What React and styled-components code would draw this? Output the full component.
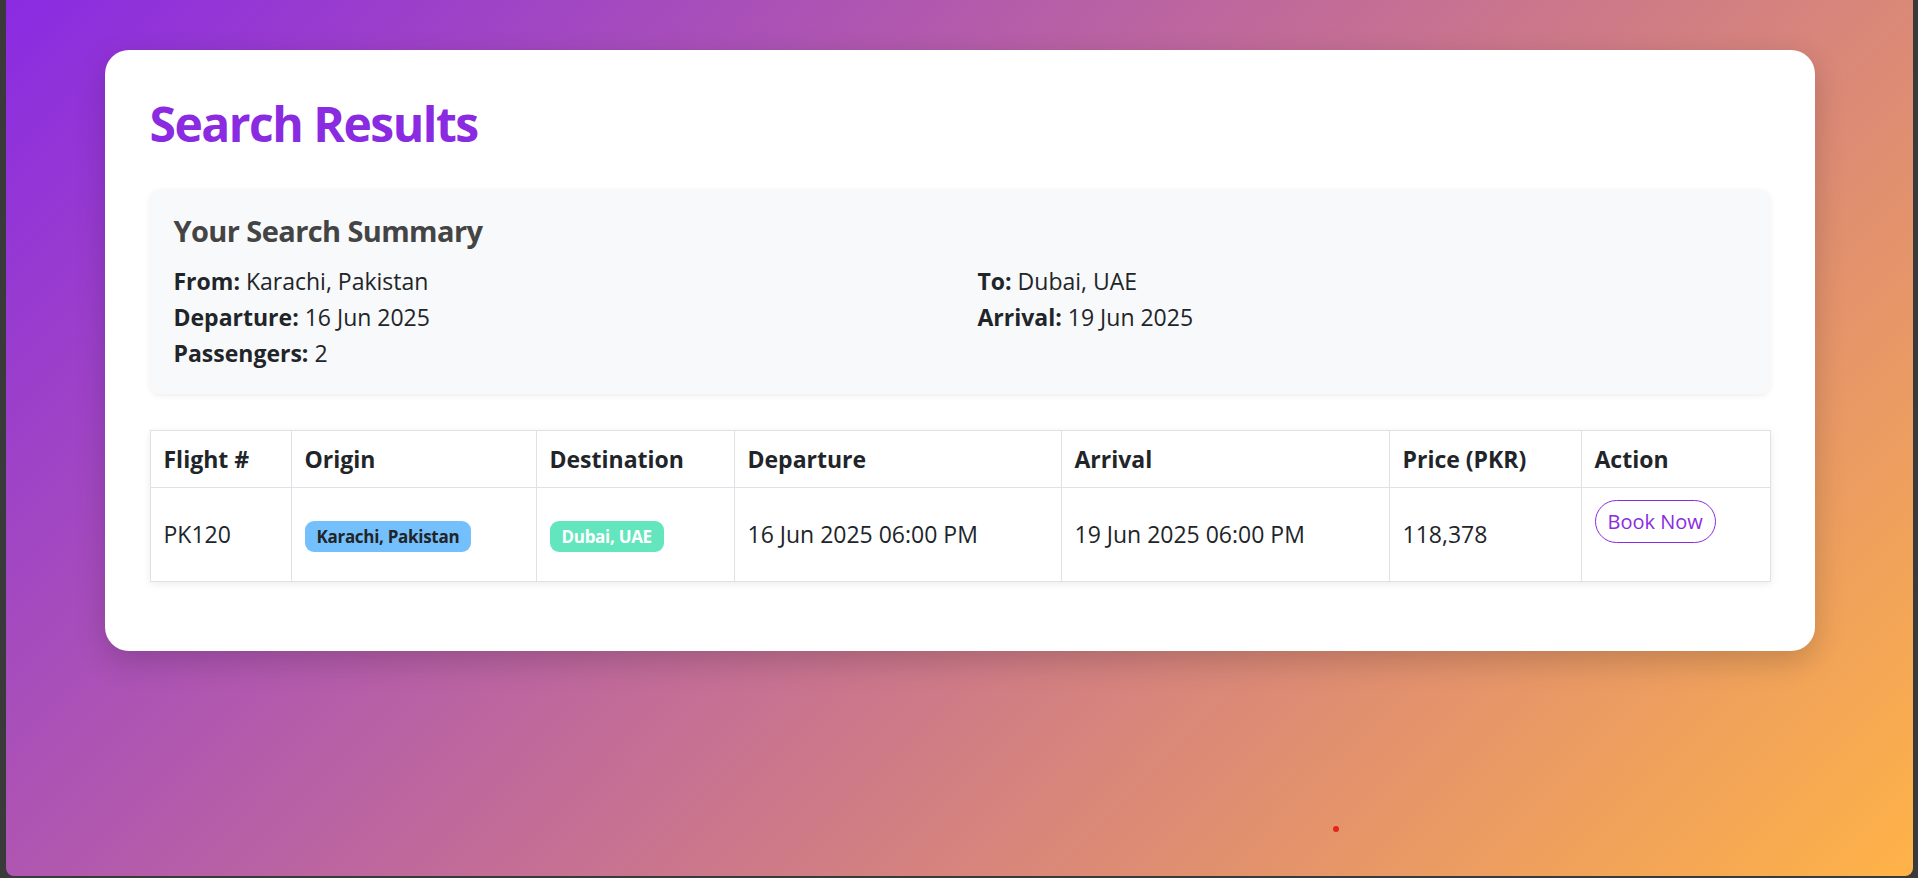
import React from 'react';
import styled, { createGlobalStyle } from 'styled-components';

const GlobalStyle = createGlobalStyle`
  html, body {
    margin: 0;
    height: 100%;
  }
  body {
    font-family: "Open Sans", "Noto Sans", sans-serif;
    color: #212529;
  }
  #root {
    height: 100%;
  }
`

const Frame = styled.div`
  position: relative;
  height: 100vh;
  box-sizing: border-box;
  padding: 0 5px 2px 6px;
  background: #3a3a3a;
`

const Backdrop = styled.main`
  height: 100%;
  box-sizing: border-box;
  padding-top: 50px;
  border-radius: 0 0 8px 8px;
  background: linear-gradient(135deg, #8a2be2 0%, #ffb347 100%);
`

const Card = styled.section`
  width: 1710px;
  margin: 0 auto;
  box-sizing: border-box;
  padding: 45px;
  background: #fff;
  border-radius: 24px;
  box-shadow: 0 10px 30px rgba(0, 0, 0, 0.18);
`

const Title = styled.h1`
  margin: 0 0 36px;
  font-size: 48px;
  line-height: 1.2;
  font-weight: 700;
  color: #8a2be2;
  letter-spacing: -1.5px;
`

const Summary = styled.div`
  padding: 24px 24px 23px;
  margin-bottom: 36px;
  background: #f8f9fa;
  border-radius: 10px;
  box-shadow: 0 2px 6px rgba(0, 0, 0, 0.07);
`

const SummaryTitle = styled.h3`
  margin: 0 0 14px;
  font-size: 29px;
  line-height: 36px;
  font-weight: 700;
  color: #444;
  letter-spacing: -0.6px;
`

const SummaryGrid = styled.div`
  display: grid;
  grid-template-columns: 1fr 1fr;
  column-gap: 36px;
`

const Line = styled.p`
  margin: 0;
  font-size: 23px;
  line-height: 36px;

  strong {
    font-weight: 700;
  }
`

const Table = styled.table`
  width: 100%;
  table-layout: fixed;
  border-collapse: collapse;
  margin-bottom: 24px;
  box-shadow: 0 2px 8px rgba(0, 0, 0, 0.08);
`

const Th = styled.th`
  text-align: left;
  font-size: 23px;
  font-weight: 700;
  line-height: 36px;
  padding: 10px 13px;
  border: 1px solid #dee2e6;
`

const Td = styled.td`
  height: 69px;
  font-size: 23px;
  line-height: 36px;
  padding: 12px 13px;
  vertical-align: ${p => (p.$top ? 'top' : 'middle')};
  border: 1px solid #dee2e6;
`

const Badge = styled.span`
  display: inline-block;
  padding: 7px 12px 7px;
  font-size: 17px;
  font-weight: 700;
  line-height: 1;
  letter-spacing: -0.3px;
  border-radius: 9px;
  background: ${p => p.$bg};
  color: ${p => p.$fg};
`

const BookButton = styled.button`
  font-family: inherit;
  font-size: 20px;
  line-height: 31px;
  padding: 5px 12px;
  color: #8a2be2;
  background: #fff;
  border: 1.5px solid #8a2be2;
  border-radius: 999px;
  cursor: pointer;
`

const Dot = styled.span`
  position: absolute;
  left: 1333px;
  top: 826px;
  width: 6px;
  height: 6px;
  border-radius: 50%;
  background: #e5241b;
`

const columns = [
  ['Flight #', 141],
  ['Origin', 245],
  ['Destination', 198],
  ['Departure', 327],
  ['Arrival', 328],
  ['Price (PKR)', 192],
  ['Action', 189],
];

export default function App() {
  return (
    <Frame>
      <GlobalStyle />
      <Backdrop>
        <Card>
          <Title>Search Results</Title>

          <Summary>
            <SummaryTitle>Your Search Summary</SummaryTitle>
            <SummaryGrid>
              <div>
                <Line><strong>From:</strong> Karachi, Pakistan</Line>
                <Line><strong>Departure:</strong> 16 Jun 2025</Line>
                <Line><strong>Passengers:</strong> 2</Line>
              </div>
              <div>
                <Line><strong>To:</strong> Dubai, UAE</Line>
                <Line><strong>Arrival:</strong> 19 Jun 2025</Line>
              </div>
            </SummaryGrid>
          </Summary>

          <Table>
            <colgroup>
              {columns.map(([name, w]) => (
                <col key={name} style={{ width: w }} />
              ))}
            </colgroup>
            <thead>
              <tr>
                {columns.map(([name]) => (
                  <Th key={name}>{name}</Th>
                ))}
              </tr>
            </thead>
            <tbody>
              <tr>
                <Td>PK120</Td>
                <Td><Badge $bg="#74c0fc" $fg="#212529">Karachi, Pakistan</Badge></Td>
                <Td><Badge $bg="#63e6be" $fg="#fff">Dubai, UAE</Badge></Td>
                <Td>16 Jun 2025 06:00 PM</Td>
                <Td>19 Jun 2025 06:00 PM</Td>
                <Td>118,378</Td>
                <Td $top><BookButton>Book Now</BookButton></Td>
              </tr>
            </tbody>
          </Table>
        </Card>
      </Backdrop>
      <Dot />
    </Frame>
  )
}
